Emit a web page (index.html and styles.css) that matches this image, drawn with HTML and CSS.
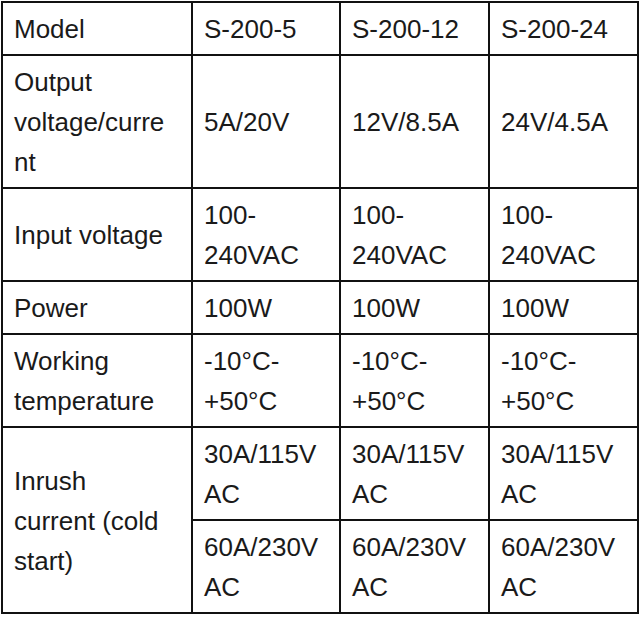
FILE: index.html
```html
<!DOCTYPE html>
<html lang="en">
<head>
<meta charset="utf-8">
<title>S-200 specifications</title>
<link rel="stylesheet" href="styles.css">
</head>
<body>
<table class="spec">
  <colgroup>
    <col class="c1"><col class="c2"><col class="c3"><col class="c4">
  </colgroup>
  <tbody>
    <tr>
      <td class="label">Model</td>
      <td>S-200-5</td>
      <td>S-200-12</td>
      <td>S-200-24</td>
    </tr>
    <tr>
      <td class="label">Output voltage/&#8288;current</td>
      <td>5A/20V</td>
      <td>12V/8.5A</td>
      <td>24V/4.5A</td>
    </tr>
    <tr>
      <td class="label">Input voltage</td>
      <td>100-240VAC</td>
      <td>100-240VAC</td>
      <td>100-240VAC</td>
    </tr>
    <tr>
      <td class="label">Power</td>
      <td>100W</td>
      <td>100W</td>
      <td>100W</td>
    </tr>
    <tr>
      <td class="label">Working temperature</td>
      <td>-10°C-<wbr>+50°C</td>
      <td>-10°C-<wbr>+50°C</td>
      <td>-10°C-<wbr>+50°C</td>
    </tr>
    <tr>
      <td class="label" rowspan="2">Inrush current (cold start)</td>
      <td>30A/115V AC</td>
      <td>30A/115V AC</td>
      <td>30A/115V AC</td>
    </tr>
    <tr>
      <td>60A/230V AC</td>
      <td>60A/230V AC</td>
      <td>60A/230V AC</td>
    </tr>
  </tbody>
</table>
</body>
</html>
```
FILE: styles.css
```css
html, body {
  margin: 0;
  padding: 0;
  background: #ffffff;
}

body {
  padding: 1px 0 0 1px;
}

.spec {
  border-collapse: collapse;
  table-layout: fixed;
  width: 636px;
  font-family: "Liberation Sans", Arial, sans-serif;
  font-size: 26px;
  line-height: 40px;
  color: #1a1a1a;
  border: 2px solid #111111;
}

.c1 { width: 190px; }
.c2 { width: 148px; }
.c3 { width: 149px; }
.c4 { width: 149px; }

.spec td {
  border: 2px solid #111111;
  padding: 6px 8px 5px 11px;
  vertical-align: middle;
  text-align: left;
  overflow-wrap: anywhere;
}

.spec td.label {
  padding-right: 20px;
}
```
